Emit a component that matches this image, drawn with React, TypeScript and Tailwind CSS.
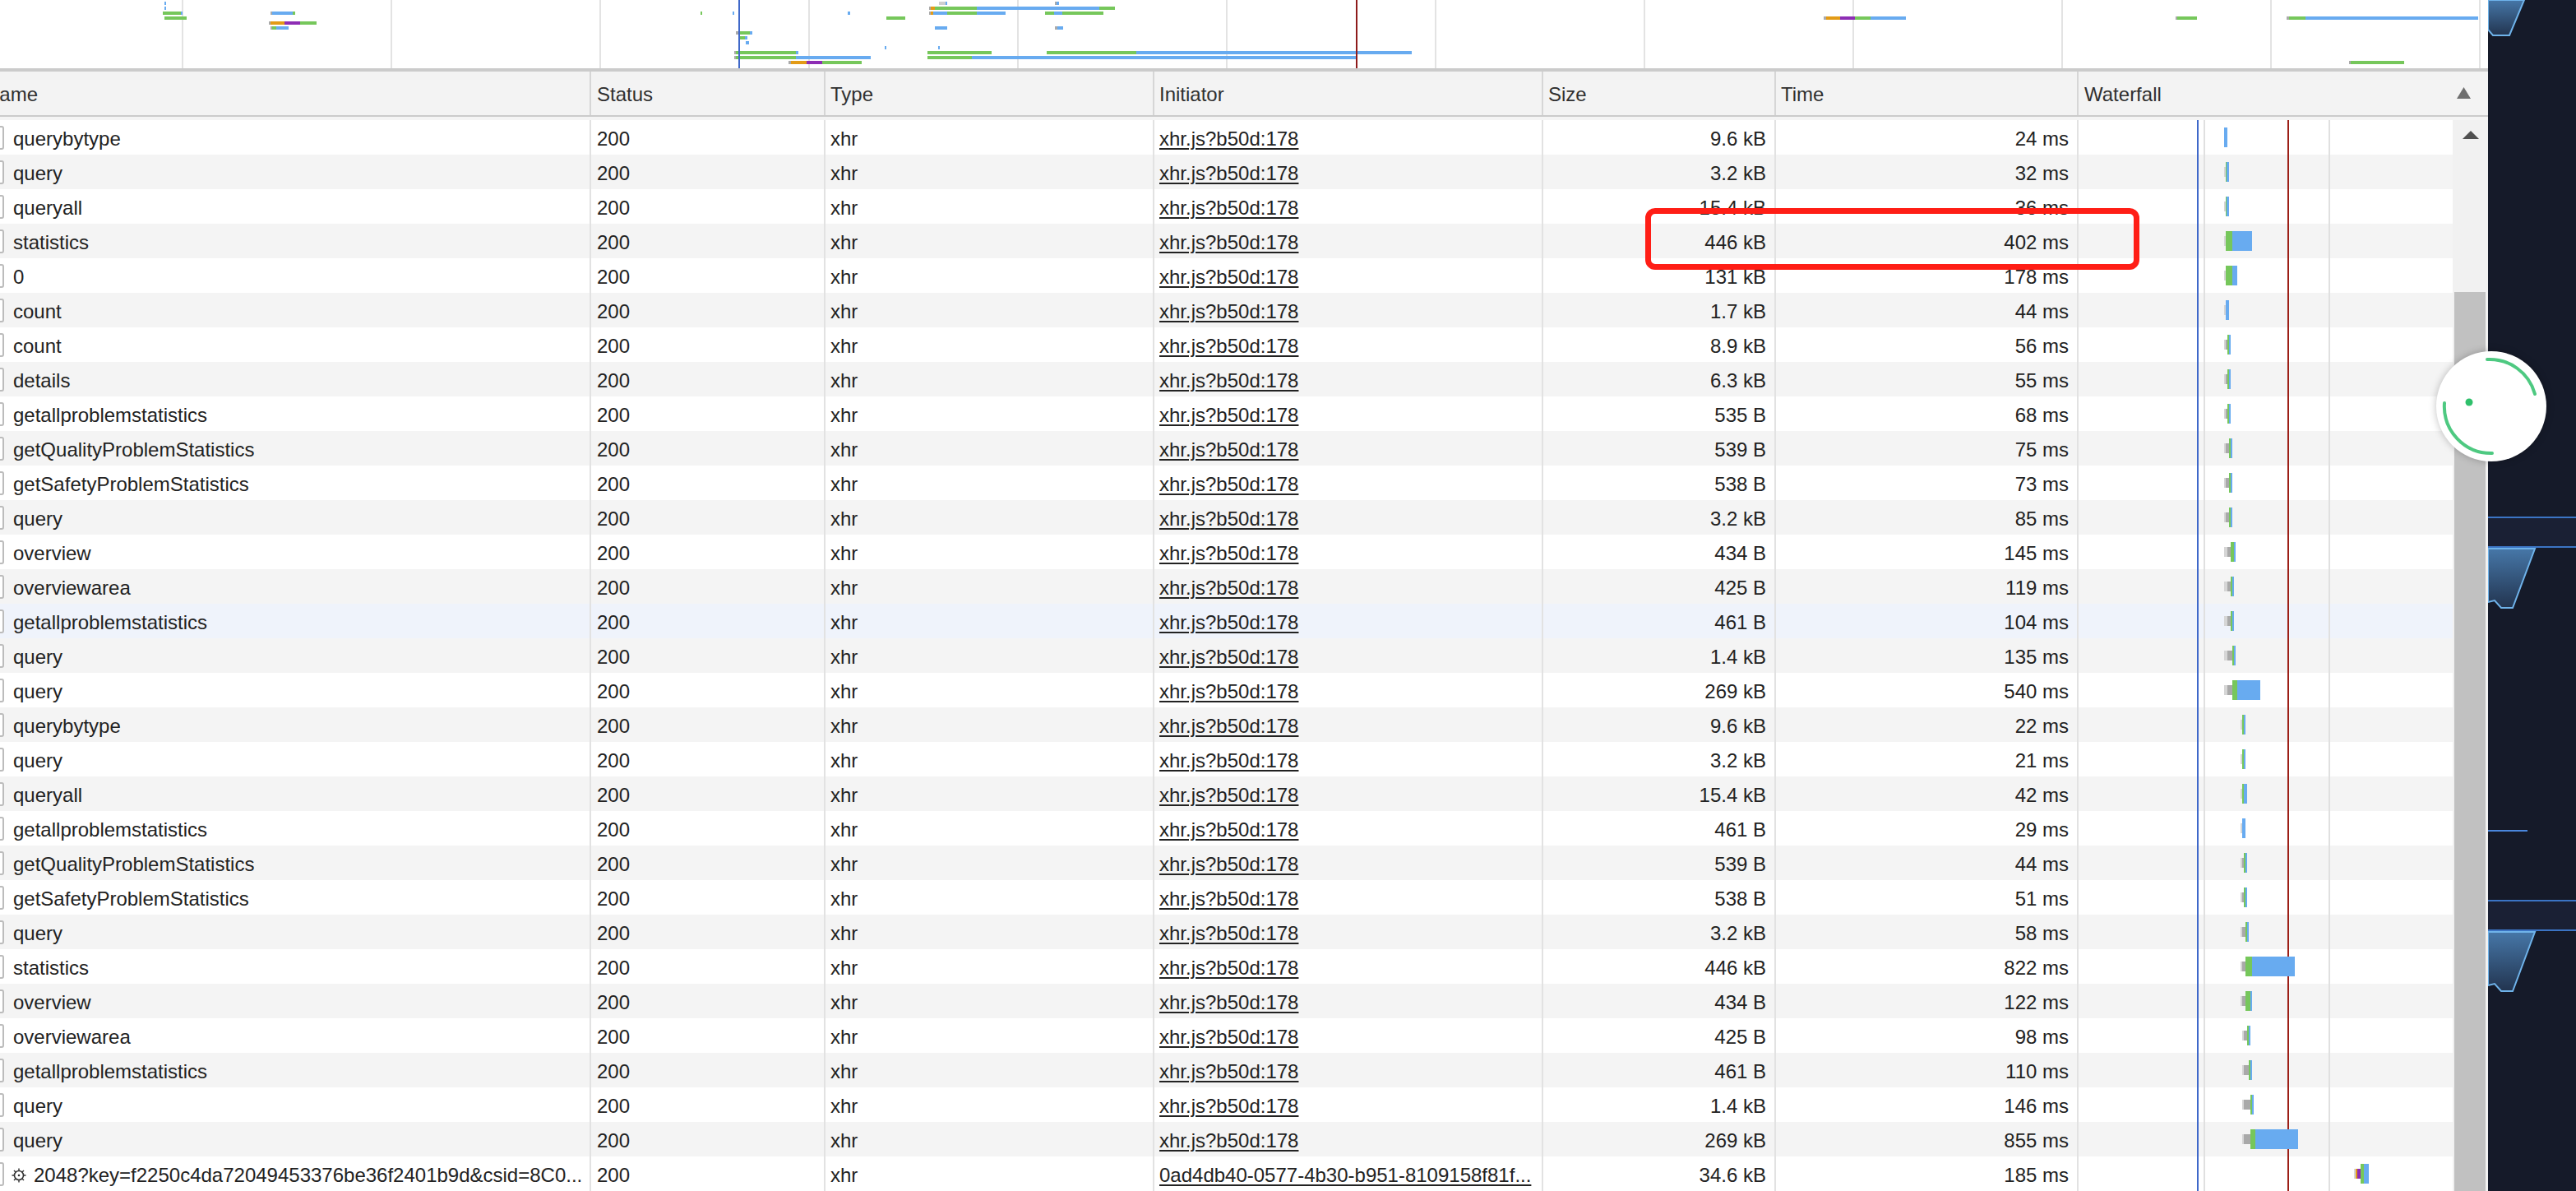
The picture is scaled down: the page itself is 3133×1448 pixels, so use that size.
import React from 'react';

type Row = { name: string; size: string; time: string; initiator?: string; special?: boolean };

const rows: Row[] = [
  { name: 'querybytype', size: '9.6 kB', time: '24 ms' },
  { name: 'query', size: '3.2 kB', time: '32 ms' },
  { name: 'queryall', size: '15.4 kB', time: '36 ms' },
  { name: 'statistics', size: '446 kB', time: '402 ms' },
  { name: '0', size: '131 kB', time: '178 ms' },
  { name: 'count', size: '1.7 kB', time: '44 ms' },
  { name: 'count', size: '8.9 kB', time: '56 ms' },
  { name: 'details', size: '6.3 kB', time: '55 ms' },
  { name: 'getallproblemstatistics', size: '535 B', time: '68 ms' },
  { name: 'getQualityProblemStatistics', size: '539 B', time: '75 ms' },
  { name: 'getSafetyProblemStatistics', size: '538 B', time: '73 ms' },
  { name: 'query', size: '3.2 kB', time: '85 ms' },
  { name: 'overview', size: '434 B', time: '145 ms' },
  { name: 'overviewarea', size: '425 B', time: '119 ms' },
  { name: 'getallproblemstatistics', size: '461 B', time: '104 ms' },
  { name: 'query', size: '1.4 kB', time: '135 ms' },
  { name: 'query', size: '269 kB', time: '540 ms' },
  { name: 'querybytype', size: '9.6 kB', time: '22 ms' },
  { name: 'query', size: '3.2 kB', time: '21 ms' },
  { name: 'queryall', size: '15.4 kB', time: '42 ms' },
  { name: 'getallproblemstatistics', size: '461 B', time: '29 ms' },
  { name: 'getQualityProblemStatistics', size: '539 B', time: '44 ms' },
  { name: 'getSafetyProblemStatistics', size: '538 B', time: '51 ms' },
  { name: 'query', size: '3.2 kB', time: '58 ms' },
  { name: 'statistics', size: '446 kB', time: '822 ms' },
  { name: 'overview', size: '434 B', time: '122 ms' },
  { name: 'overviewarea', size: '425 B', time: '98 ms' },
  { name: 'getallproblemstatistics', size: '461 B', time: '110 ms' },
  { name: 'query', size: '1.4 kB', time: '146 ms' },
  { name: 'query', size: '269 kB', time: '855 ms' },
  {
    name: '2048?key=f2250c4da72049453376be36f2401b9d&csid=8C0...',
    size: '34.6 kB',
    time: '185 ms',
    initiator: '0ad4db40-0577-4b30-b951-8109158f81f...',
    special: true,
  },
];

// waterfall timing per row: [lightGray, darkGray, green, blue, end] in page x
const timings: number[][] = [
  [2705, 2705, 2705, 2705, 2709],
  [2705, 2707, 2707, 2708, 2711],
  [2705, 2707, 2707, 2708, 2711],
  [2705, 2707, 2707, 2715, 2739],
  [2705, 2707, 2707, 2715, 2721],
  [2705, 2707, 2707, 2707, 2711],
  [2705, 2707, 2709, 2711, 2713],
  [2705, 2707, 2709, 2711, 2713],
  [2705, 2707, 2709, 2711, 2713],
  [2705, 2707, 2711, 2713, 2715],
  [2705, 2707, 2711, 2713, 2715],
  [2705, 2707, 2711, 2713, 2715],
  [2705, 2709, 2713, 2717, 2719],
  [2705, 2709, 2713, 2715, 2717],
  [2705, 2709, 2713, 2715, 2717],
  [2705, 2709, 2715, 2717, 2719],
  [2705, 2709, 2715, 2721, 2749],
  [2725, 2727, 2727, 2729, 2731],
  [2725, 2727, 2727, 2729, 2731],
  [2725, 2727, 2727, 2729, 2733],
  [2725, 2727, 2727, 2727, 2731],
  [2725, 2727, 2729, 2731, 2733],
  [2725, 2727, 2729, 2731, 2733],
  [2725, 2727, 2731, 2733, 2735],
  [2725, 2727, 2731, 2739, 2791],
  [2725, 2727, 2731, 2737, 2739],
  [2727, 2729, 2733, 2735, 2737],
  [2727, 2729, 2735, 2737, 2739],
  [2727, 2729, 2737, 2739, 2741],
  [2727, 2729, 2737, 2743, 2795],
  [2863, 2865, 2871, 2875, 2881],
];

const GREEN = '#76c75b';
const BLUE = '#68abf0';
const ORANGE = '#e39b16';
const PURPLE = '#8d2db4';
const GRAY = '#aaaaaa';

// overview bars: [x1, x2, y, color]
const overviewBars: [number, number, number, string][] = [
  [200, 202, 2, BLUE], [200, 202, 8, BLUE],
  [198, 220, 14, GREEN], [220, 222, 14, BLUE],
  [200, 227, 20, GREEN],
  [329, 331, 14, GRAY], [331, 356, 14, BLUE], [356, 359, 14, GREEN],
  [327, 329, 26, GRAY], [329, 346, 26, ORANGE], [346, 365, 26, PURPLE], [365, 385, 26, GREEN],
  [329, 331, 32, GRAY], [331, 336, 32, GREEN], [336, 351, 32, BLUE],
  [852, 854, 14, GREEN], [891, 893, 14, BLUE], [1031, 1034, 14, BLUE],
  [1078, 1101, 20, GREEN],
  [895, 898, 38, GRAY], [898, 912, 38, GREEN], [912, 915, 38, BLUE],
  [900, 906, 44, GREEN], [906, 909, 44, BLUE],
  [907, 911, 50, BLUE],
  [1076, 1078, 56, BLUE], [1141, 1143, 56, BLUE],
  [893, 895, 62, GRAY], [895, 968, 62, GREEN], [968, 971, 62, BLUE],
  [893, 895, 68, GRAY], [895, 968, 68, GREEN], [968, 1059, 68, BLUE],
  [959, 962, 74, GRAY], [962, 981, 74, ORANGE], [981, 1000, 74, PURPLE], [1000, 1046, 74, GREEN], [1046, 1048, 74, BLUE],
  [1142, 1150, 2, '#cfcfcf'], [1150, 1152, 2, BLUE],
  [1283, 1285, 2, GRAY], [1285, 1288, 2, BLUE],
  [1130, 1132, 8, GRAY], [1132, 1137, 8, ORANGE], [1137, 1188, 8, GREEN], [1188, 1337, 8, BLUE], [1337, 1356, 8, GREEN],
  [1130, 1132, 14, GRAY], [1132, 1135, 14, ORANGE], [1135, 1152, 14, BLUE], [1152, 1188, 14, GREEN], [1188, 1223, 14, BLUE],
  [1271, 1282, 14, GREEN], [1282, 1292, 14, BLUE], [1292, 1342, 14, GREEN],
  [1137, 1152, 32, BLUE], [1283, 1286, 32, GRAY], [1286, 1293, 32, BLUE],
  [1128, 1206, 62, GREEN], [1273, 1382, 62, GREEN], [1382, 1717, 62, BLUE],
  [1128, 1182, 68, GREEN], [1182, 1650, 68, BLUE],
  [1000, 1048, 74, GREEN],
  [2218, 2221, 20, GRAY], [2221, 2238, 20, ORANGE], [2238, 2256, 20, PURPLE], [2256, 2275, 20, GREEN], [2275, 2318, 20, BLUE],
  [2646, 2648, 20, GRAY], [2648, 2672, 20, GREEN],
  [2781, 2784, 20, GRAY], [2784, 2804, 20, GREEN], [2804, 3014, 20, BLUE],
  [2857, 2859, 74, GRAY], [2859, 2924, 74, GREEN],
];

const cols = 'grid grid-cols-[717px_285px_400px_473px_283px_368px_1fr]';

function Overview() {
  const grid = Array.from({ length: 12 }, (_, i) => 222 + i * 254);
  return (
    <svg width={3026} height={83} className="block flex-none">
      {grid.map((x) => (
        <rect key={x} x={x - 1} y={0} width={2} height={83} fill="#e3e3e3" />
      ))}
      {overviewBars.map(([x1, x2, y, c], i) => (
        <rect key={i} x={x1} y={y} width={x2 - x1} height={4} fill={c} />
      ))}
      <rect x={898} y={0} width={2} height={83} fill="#3f68c9" />
      <rect x={1649} y={0} width={2} height={83} fill="#8e1b1b" />
    </svg>
  );
}

function Header() {
  const cell = 'flex items-center border-l-2 border-[#d6d6d6] pt-[3px]';
  return (
    <div className={`${cols} h-[55px] flex-none border-b-2 border-[#cbcbcb] bg-[#f3f3f3] text-[24px] text-[#303030]`}>
      <div className="flex items-center overflow-hidden pt-[3px]">
        <span className="-ml-[18px]">Name</span>
      </div>
      <div className={`${cell} pl-[7px]`}>Status</div>
      <div className={`${cell} pl-[6px]`}>Type</div>
      <div className={`${cell} pl-[6px]`}>Initiator</div>
      <div className={`${cell} pl-[6px]`}>Size</div>
      <div className={`${cell} pl-[6px]`}>Time</div>
      <div className={`${cell} justify-between pl-[7px] pr-[21px]`}>
        <span>Waterfall</span>
        <svg width={17} height={14} viewBox="0 0 17 14" className="-mt-[4px]">
          <path d="M8.5 0 L17 14 L0 14 Z" fill="#6f6f6f" />
        </svg>
      </div>
    </div>
  );
}

function GearIcon() {
  return (
    <svg width={18} height={18} viewBox="0 0 18 18" className="ml-[9px] mt-[3px] flex-none">
      <circle cx={9} cy={9} r={5.5} fill="none" stroke="#333" strokeWidth={1.6} />
      <circle cx={9} cy={9} r={1.3} fill="#333" />
      <path
        d="M9 0.5v3M9 14.5v3M0.5 9h3M14.5 9h3M3 3l2 2M13 13l2 2M15 3l-2 2M5 13l-2 2"
        stroke="#333"
        strokeWidth={1.4}
      />
    </svg>
  );
}

function TableRow({ row, index }: { row: Row; index: number }) {
  const bg = index === 14 ? 'bg-[#eff3fb]' : index % 2 === 1 ? 'bg-[#f4f4f4]' : 'bg-white';
  const cell = 'flex items-center border-l-2 border-[#e2e2e2] pt-[3px] whitespace-nowrap';
  return (
    <div className={`${cols} h-[42px] flex-none ${bg} text-[24px] text-[#222]`}>
      <div className="flex items-center overflow-hidden whitespace-nowrap">
        <div className="-ml-[12px] h-[29px] w-[17px] flex-none rounded-[3px] border-2 border-[#bcbcbc] bg-white" />
        {row.special ? (
          <>
            <GearIcon />
            <span className="ml-[9px] pt-[3px]">{row.name}</span>
          </>
        ) : (
          <span className="ml-[11px] pt-[3px]">{row.name}</span>
        )}
      </div>
      <div className={`${cell} pl-[7px]`}>200</div>
      <div className={`${cell} pl-[6px]`}>xhr</div>
      <div className={`${cell} pl-[6px]`}>
        <span className="underline decoration-2 underline-offset-[3px]">{row.initiator ?? 'xhr.js?b50d:178'}</span>
      </div>
      <div className={`${cell} justify-end pr-[10px]`}>{row.size}</div>
      <div className={`${cell} justify-end pr-[10px]`}>{row.time}</div>
      <div className="border-l-2 border-[#e2e2e2]" />
    </div>
  );
}

function WaterfallLines() {
  const o = 2526;
  return (
    <svg width={457} height={1302} className="pointer-events-none absolute left-[2526px] top-0">
      <rect x={2680 - o} y={0} width={2} height={1302} fill="#e0e0e0" />
      <rect x={2832 - o} y={0} width={2} height={1302} fill="#e0e0e0" />
      <rect x={2672 - o} y={0} width={2} height={1302} fill="#3f68c9" />
      <rect x={2782 - o} y={0} width={2} height={1302} fill="#9c1f17" />
      {timings.map(([lg, dg, g, b, e], i) => {
        const c = i * 42 + 21;
        const special = i === 30;
        return (
          <g key={i}>
            {dg > lg && <rect x={lg - o} y={c - 6} width={dg - lg} height={12} fill="#d6d6d6" />}
            {g > dg && !special && <rect x={dg - o} y={c - 6} width={g - dg} height={12} fill="#a9a9a9" />}
            {special && (
              <>
                <rect x={2865 - o} y={c - 6} width={2} height={12} fill={ORANGE} />
                <rect x={2867 - o} y={c - 6} width={4} height={12} fill={PURPLE} />
              </>
            )}
            {b > g && <rect x={g - o} y={c - 12} width={b - g} height={24} fill={GREEN} />}
            {e > b && <rect x={b - o} y={c - 12} width={e - b} height={24} fill={BLUE} />}
          </g>
        );
      })}
    </svg>
  );
}

function Scrollbar() {
  return (
    <div className="flex w-[43px] flex-none flex-col bg-[#f1f1f1]">
      <div className="flex h-[209px] flex-none justify-center pt-[13px]">
        <svg width={20} height={10} viewBox="0 0 20 10">
          <path d="M10 0 L20 10 L0 10 Z" fill="#505050" />
        </svg>
      </div>
      <div className="ml-[2px] mr-[3px] flex-1 bg-[#c1c1c1]" />
    </div>
  );
}

function DarkSide() {
  return (
    <div className="h-[1448px] w-[107px] flex-none bg-[#151a29]">
      <svg width={107} height={1448} className="block">
        <defs>
          <linearGradient id="trap" x1="0" y1="0" x2="0" y2="1">
            <stop offset="0" stopColor="#4677a8" />
            <stop offset="1" stopColor="#22344f" />
          </linearGradient>
        </defs>
        <path d="M0 0 L44 0 L26 43 L6 43 L0 36 Z" fill="url(#trap)" stroke="#6fb3ea" strokeWidth={2} />
        <rect x={0} y={628} width={107} height={37} fill="#1a2034" />
        <rect x={0} y={628} width={107} height={2} fill="#3b74c4" />
        <rect x={0} y={664} width={107} height={2} fill="#3b74c4" />
        <path d="M0 667 L57 667 L30 739 L16 739 L8 730 L0 732 Z" fill="url(#trap)" stroke="#6fb3ea" strokeWidth={2} />
        <rect x={0} y={1009} width={48} height={2} fill="#4a86dc" />
        <rect x={0} y={1094} width={107} height={37} fill="#1a2034" />
        <rect x={0} y={1094} width={107} height={2} fill="#3b74c4" />
        <rect x={0} y={1130} width={107} height={2} fill="#3b74c4" />
        <path d="M0 1133 L57 1133 L30 1205 L16 1205 L8 1196 L0 1198 Z" fill="url(#trap)" stroke="#6fb3ea" strokeWidth={2} />
      </svg>
    </div>
  );
}

function Spinner() {
  return (
    <div className="absolute left-[2963px] top-[427px] h-[134px] w-[134px] rounded-full bg-white shadow-[0_0_10px_rgba(0,0,0,0.25)]">
      <svg width={134} height={134} viewBox="-67 -67 134 134">
        <path d="M-5 -57 A57 57 0 0 1 53 -15" fill="none" stroke="#2fc06b" strokeWidth={4} strokeLinecap="round" opacity={0.85} />
        <path d="M-57 -4 A57 57 0 0 0 1 57" fill="none" stroke="#2fc06b" strokeWidth={4} strokeLinecap="round" opacity={0.85} />
        <circle cx={-27} cy={-5} r={4.5} fill="#2fc06b" />
      </svg>
    </div>
  );
}

export default function App() {
  return (
    <div className="relative flex h-[1448px] w-[3133px] overflow-hidden bg-[#151a29] font-['Liberation_Sans',Arial,sans-serif]">
      <div className="flex h-[1448px] w-[3026px] flex-none flex-col bg-white">
        <Overview />
        <div className="h-[4px] flex-none bg-[#cbcbcb]" />
        <Header />
        <div className="h-[4px] flex-none bg-[#f4f4f4]" />
        <div className="flex h-[1302px] flex-none">
          <div className="relative flex w-[2983px] flex-none flex-col">
            {rows.map((r, i) => (
              <TableRow key={i} row={r} index={i} />
            ))}
            <WaterfallLines />
          </div>
          <Scrollbar />
        </div>
      </div>
      <DarkSide />
      <div className="pointer-events-none absolute left-[2001px] top-[253px] h-[75px] w-[601px] rounded-[12px] border-[7px] border-[#ff1e16]" />
      <Spinner />
    </div>
  );
}
